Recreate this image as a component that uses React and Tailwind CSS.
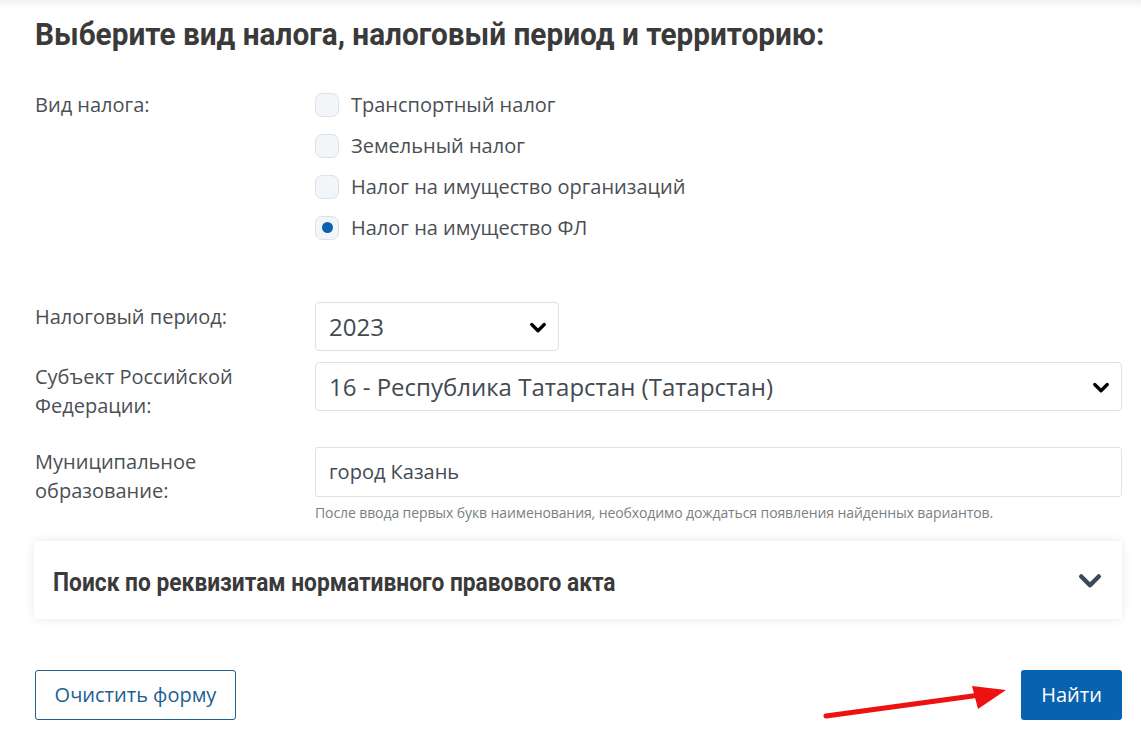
import React from "react";

const body = { fontFamily: '"Open Sans", "Liberation Sans", sans-serif' };
const cond = { fontFamily: 'Roboto, "Liberation Sans", sans-serif' };

function Chevron({ className }) {
  return (
    <svg viewBox="0 0 16 16" className={className} fill="none" stroke="currentColor" strokeWidth="2.6" strokeLinecap="round" strokeLinejoin="round">
      <path d="M3 6l5 5 5-5" />
    </svg>
  );
}

function Check({ label, checked }) {
  return (
    <label className="flex items-center gap-3 h-[41px]">
      <span className="w-6 h-6 rounded-[7px] border border-[#dbe3ea] bg-[#f3f6f9] flex items-center justify-center">
        {checked && <span className="w-[11px] h-[11px] rounded-full bg-[#0b63b0]" />}
      </span>
      <span className="text-[20px] text-[#4b4f54]">{label}</span>
    </label>
  );
}

function Row({ label, children, className = "" }) {
  return (
    <div className={"flex " + className}>
      <div className="w-[280px] shrink-0 text-[20px] leading-[29px] text-[#4b4f54]">{label}</div>
      <div className="flex-1">{children}</div>
    </div>
  );
}

export default function App() {
  return (
    <div className="w-[1141px] h-[746px] bg-white overflow-hidden relative" style={body}>
      <div className="h-2 bg-gradient-to-b from-[#f0f0f0] to-white" />
      <div className="pl-[35px] pr-[19px]">
        <h1 className="text-[32px] font-bold text-[#3a3a3a] leading-[40px] mt-[6px] whitespace-nowrap origin-left scale-x-[0.93]" style={cond}>
          Выберите вид налога, налоговый период и территорию:
        </h1>

        <Row label="Вид налога:" className="mt-[36px]">
          <div className="-mt-[6px]">
            <Check label="Транспортный налог" />
            <Check label="Земельный налог" />
            <Check label="Налог на имущество организаций" />
            <Check label="Налог на имущество ФЛ" checked />
          </div>
        </Row>

        <Row label="Налоговый период:" className="mt-[54px]">
          <div className="w-[244px] h-[49px] border border-[#dbe1e6] rounded-[4px] flex items-center justify-between pl-[13px] pr-[10px]">
            <span className="text-[24px] text-[#434a51]">2023</span>
            <Chevron className="w-[20px] h-[20px] text-black" />
          </div>
        </Row>

        <Row label={<>Субъект Российской<br />Федерации:</>} className="mt-[11px]">
          <div className="h-[49px] border border-[#dbe1e6] rounded-[4px] flex items-center justify-between pl-[13px] pr-[10px]">
            <span className="text-[24px] text-[#434a51]">16 - Республика Татарстан (Татарстан)</span>
            <Chevron className="w-[20px] h-[20px] text-black" />
          </div>
        </Row>

        <Row label={<>Муниципальное<br />образование:</>} className="mt-[27px]">
          <div className="h-[50px] border border-[#dbe1e6] rounded-[3px] flex items-center pl-[13px]">
            <span className="text-[20px] text-[#434a51]">город Казань</span>
          </div>
          <div className="text-[14px] leading-[20px] text-[#7a7f84] mt-[6px] tracking-[-0.1px]">
            После ввода первых букв наименования, необходимо дождаться появления найденных вариантов.
          </div>
        </Row>

        <div className="mt-[18px] -ml-px h-[78px] bg-white shadow-[0_0_10px_rgba(0,0,0,0.09)] flex items-center justify-between pl-[19px] pr-[18px]">
          <span className="text-[25px] font-bold text-[#3a3a3a] whitespace-nowrap origin-left scale-x-[0.91] inline-block pt-[5px]" style={cond}>
            Поиск по реквизитам нормативного правового акта
          </span>
          <Chevron className="w-[28px] h-[28px] text-[#3d4a57]" />
        </div>

        <div className="mt-[51px] flex justify-between">
          <button className="w-[201px] h-[50px] border border-[#1d5f93] rounded-[3px] text-[20px] text-[#1d5f93]">
            Очистить форму
          </button>
          <button className="w-[101px] h-[50px] bg-[#0862af] rounded-[3px] text-[20px] text-white">
            Найти
          </button>
        </div>
      </div>

      <svg className="absolute left-[820px] top-[682px] w-[190px] h-[42px]" viewBox="0 0 190 42">
        <path d="M6 34 L160 13" stroke="#ee1111" strokeWidth="5" strokeLinecap="round" />
        <path d="M152 4 L186 8 L158 27 Z" fill="#ee1111" />
      </svg>
    </div>
  );
}
